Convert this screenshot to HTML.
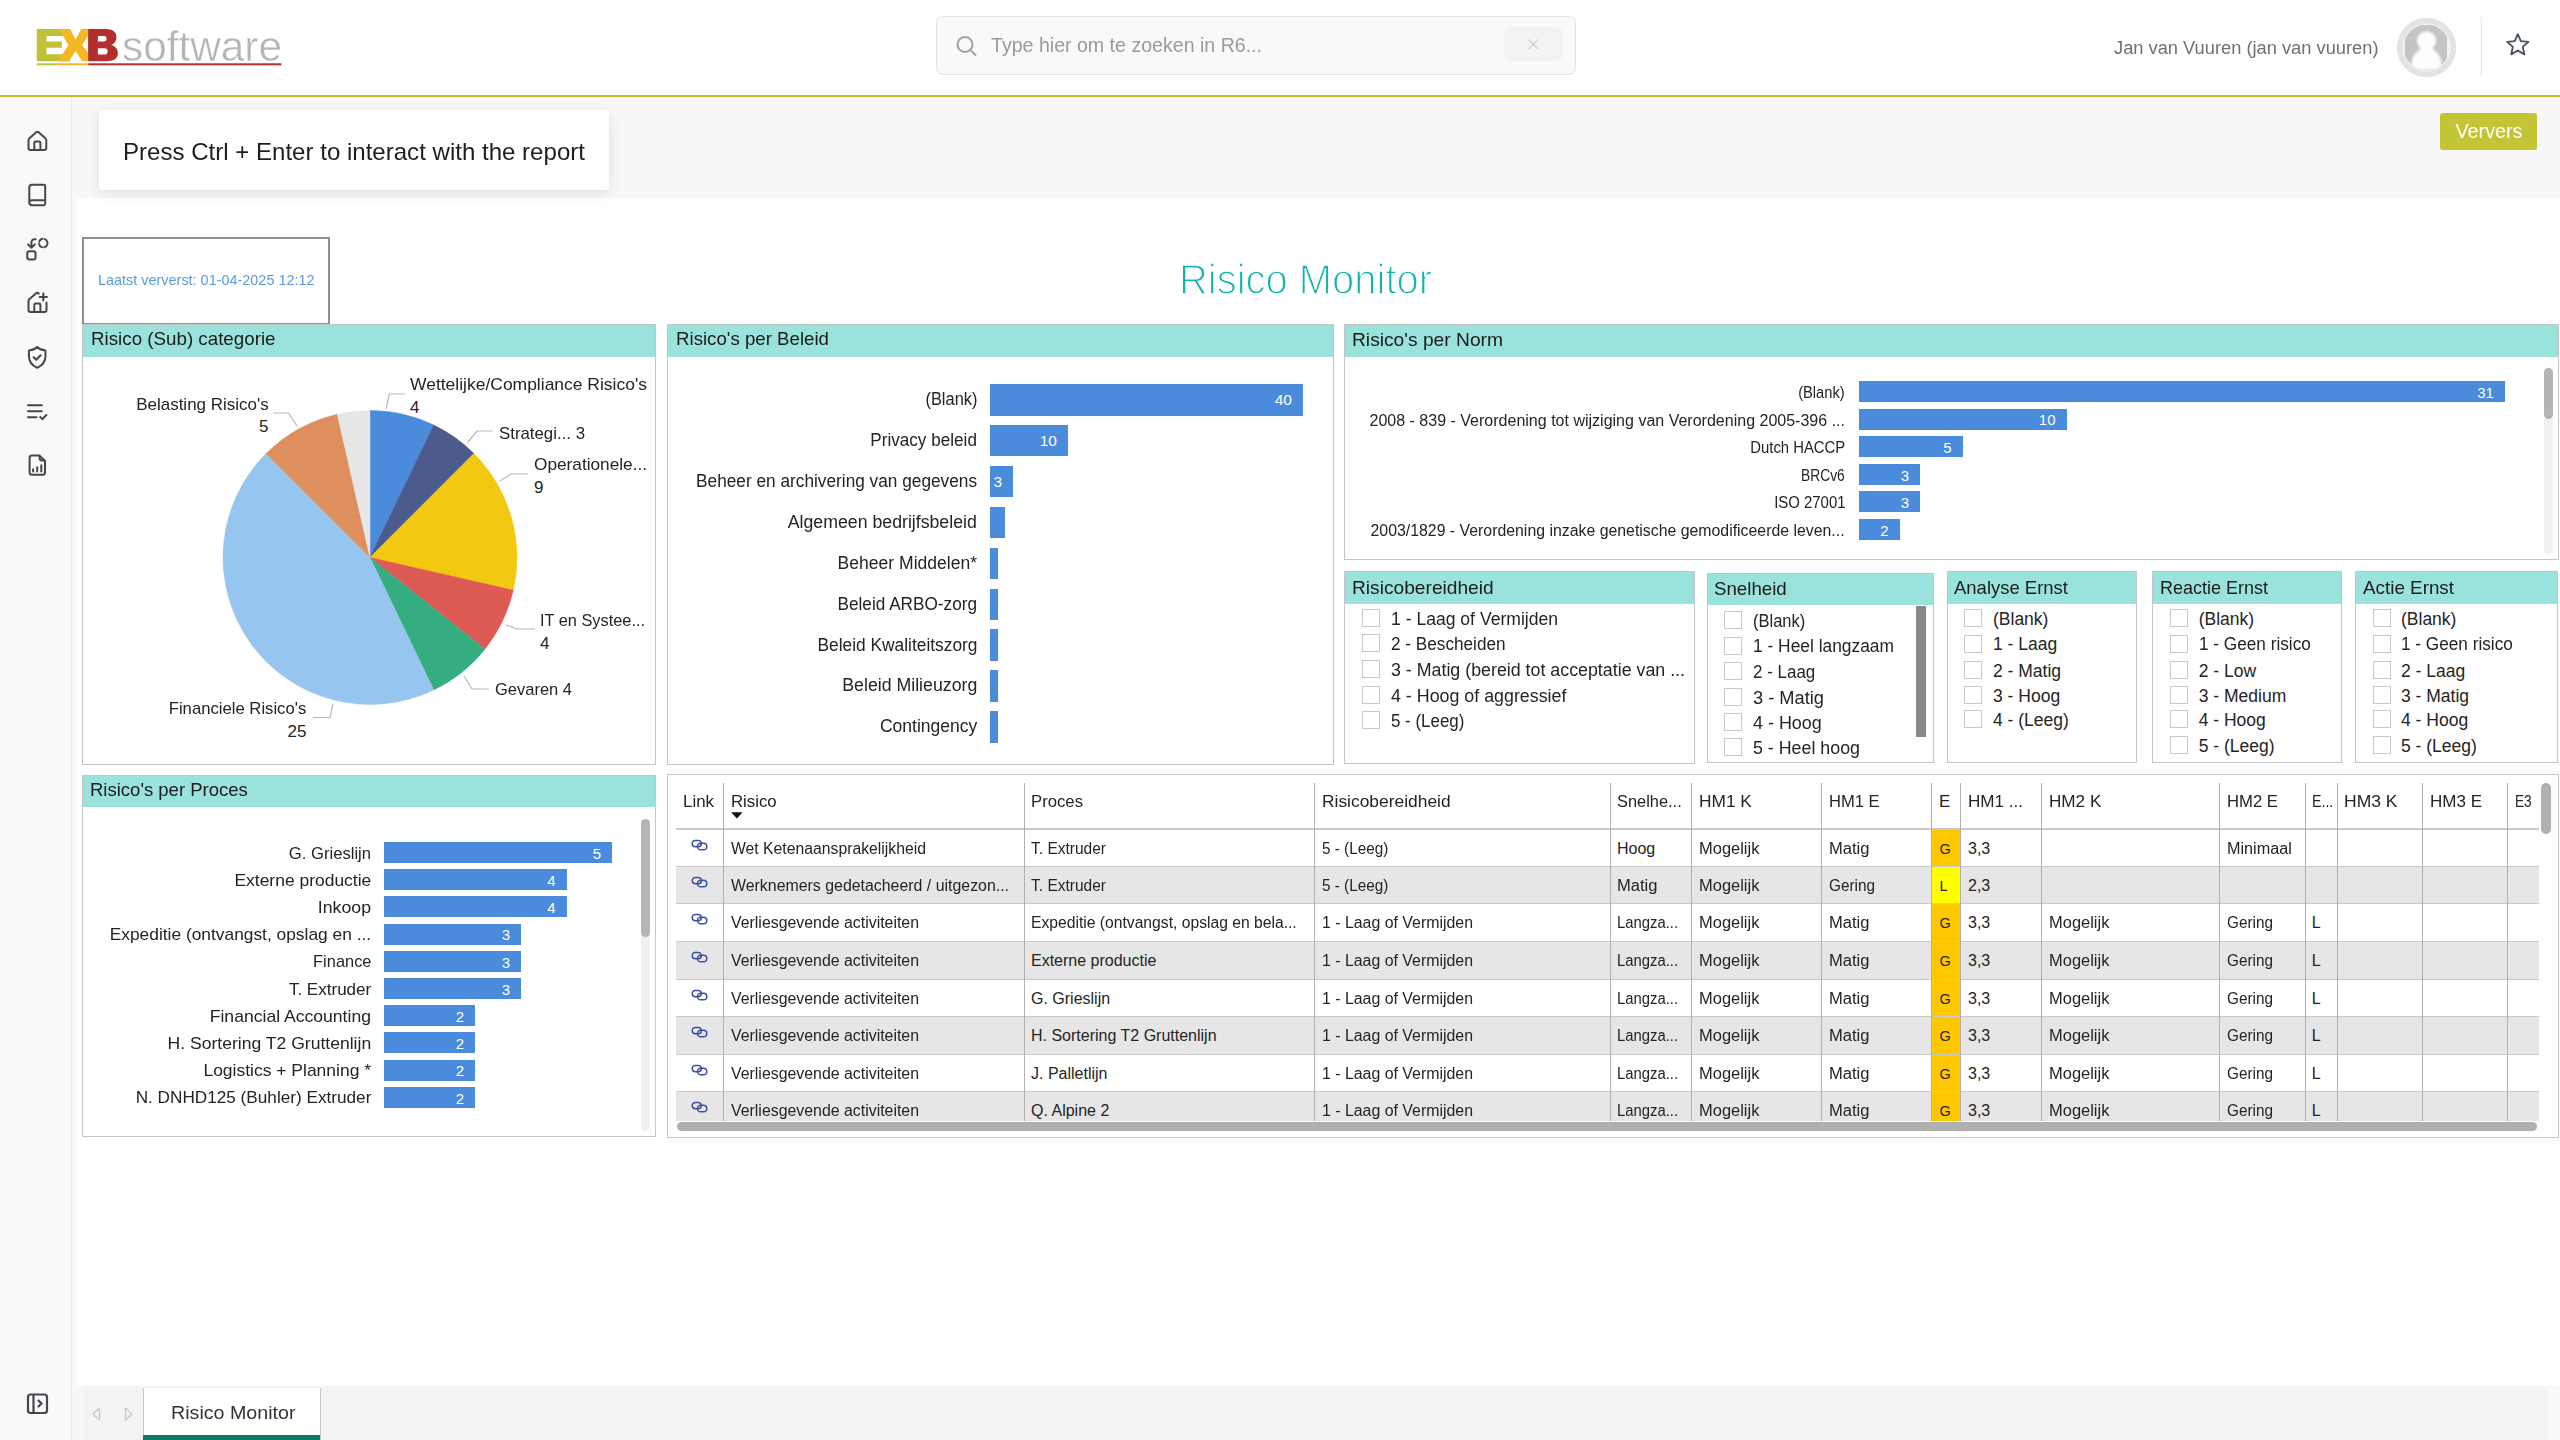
<!DOCTYPE html><html><head><meta charset="utf-8"><style>
html,body{margin:0;padding:0}
body{width:2560px;height:1440px;position:relative;overflow:hidden;background:#fff;font-family:"Liberation Sans",sans-serif}
.t{position:absolute;white-space:nowrap;line-height:1}
svg{position:absolute;overflow:visible}
</style></head><body>
<div style="position:absolute;left:0px;top:95px;width:2560px;height:2px;background:#BEC12C;"></div>
<svg style="left:0;top:0" width="300" height="80" viewBox="0 0 300 80">
<path fill="#BFC236" d="M36.75 29.1H70V36H46.5V41.5H61.8V47.7H46.5V54.2H70V61.2H36.75Z"/>
<path fill="#F5B724" d="M58.75 29.1H70.1L75.6 39.4L81.1 29.1H88V36L82.1 44.9L88 52.8V61.2H82.1L75.6 51.1L69 61.2H58L68.4 44.9Z"/>
<path fill="#B32E2E" fill-rule="evenodd" d="M88.1 29.1H106C113 29.1 116.5 32.5 116.5 37.2C116.5 41 114.5 43.6 111.3 44.9C115.5 46 117.9 49 117.9 53C117.9 58 114.5 61.2 107 61.2H88.1ZM97.9 36V41.5H104C105.8 41.5 106.6 40.4 106.6 38.8C106.6 37.1 105.8 36 104 36ZM97.9 48.3V54.5H104.5C106.6 54.5 107.7 53.3 107.7 51.4C107.7 49.5 106.6 48.3 104.5 48.3Z"/>
<rect x="36.75" y="63.3" width="21.5" height="2" fill="#BFC236"/>
<rect x="58.25" y="63.3" width="30" height="2" fill="#F5B724"/>
<rect x="88.25" y="63.3" width="193.2" height="2" fill="#B32E2E"/>
</svg>
<div class="t" style="left:121.5px;top:25.20px;font-size:43px;color:#B5B5B5;transform:scaleX(0.9846);transform-origin:left top;-webkit-text-stroke:0.45px #fff;">software</div>
<div style="position:absolute;left:936px;top:15.5px;width:640px;height:59.5px;border:1px solid #E3E3E3;border-radius:7px;background:#F9F9F9;box-sizing:border-box"></div>
<div style="position:absolute;left:1504px;top:27px;width:59px;height:34px;border-radius:6px;background:#F3F3F3"></div>
<svg style="left:0;top:0" width="1" height="1"><g fill="none" stroke="#A3A3A3" stroke-width="2"><circle cx="965" cy="44.5" r="7.5"/><path d="M970.5 50L976 55.5"/></g>
<g stroke="#D2D2D2" stroke-width="1.4"><path d="M1528.5 39.5L1538 49M1538 39.5L1528.5 49"/></g></svg>
<div class="t" style="left:991px;top:35.99px;font-size:19.5px;color:#9A9A9A;transform:scaleX(1.0041);transform-origin:left top;">Type hier om te zoeken in R6...</div>
<div class="t" style="left:2113.5px;top:39.26px;font-size:18px;color:#707070;transform:scaleX(1.0154);transform-origin:left top;">Jan van Vuuren (jan van vuuren)</div>
<svg style="left:0;top:0" width="1" height="1">
<defs><clipPath id="avc"><circle cx="2426.6" cy="47.5" r="23"/></clipPath><filter id="bl"><feGaussianBlur stdDeviation="0.9"/></filter></defs>
<circle cx="2426.6" cy="47.5" r="29.7" fill="#E3E3E3"/>
<circle cx="2426.6" cy="47.5" r="24.2" fill="#F1F1F1"/>
<g clip-path="url(#avc)"><rect x="2405" y="25" width="42" height="48" rx="13" fill="#C4C4C4"/>
<g filter="url(#bl)" fill="#FDFDFD"><circle cx="2426.6" cy="40.8" r="9.6"/><path d="M2421 48H2432L2436 52C2440 55 2442 60 2442 70H2411C2411 60 2413 55 2417 52Z"/></g></g>
<rect x="2480.75" y="17" width="1" height="60" fill="#E4E6EB"/>
<path d="M2517.80 34.10L2520.86 41.09L2528.45 41.84L2522.75 46.91L2524.38 54.36L2517.80 50.50L2511.22 54.36L2512.85 46.91L2507.15 41.84L2514.74 41.09Z" fill="none" stroke="#48515A" stroke-width="1.8" stroke-linejoin="round"/>
</svg>
<div style="position:absolute;left:0px;top:97px;width:71px;height:1343px;background:#F9F9F9;"></div>
<div style="position:absolute;left:71px;top:97px;width:1px;height:1343px;background:#E4E5EA;"></div>
<div style="position:absolute;left:72px;top:97px;width:2488px;height:101px;background:#F8F8F8;"></div>
<div style="position:absolute;left:72px;top:198px;width:3.5px;height:1188px;background:#F9F9F9;"></div>
<div style="position:absolute;left:99px;top:110px;width:510px;height:80px;background:#fff;border-radius:3px;box-shadow:0 3px 14px rgba(0,0,0,0.11)"></div>
<div class="t" style="left:123px;top:139.68px;font-size:24px;color:#1E1E1E;transform:scaleX(1.0024);transform-origin:left top;">Press Ctrl + Enter to interact with the report</div>
<div style="position:absolute;left:2440px;top:112.5px;width:97px;height:37.5px;background:#C3C536;border-radius:3px"></div>
<div class="t" style="left:1488.5px;width:2000px;text-align:center;top:120.87px;font-size:20px;color:#FFFFFF;transform:scaleX(0.9881);transform-origin:center top;">Ververs</div>
<svg style="left:0;top:0" width="1" height="1"><g fill="none" stroke="#45474D" stroke-width="2" stroke-linecap="round" stroke-linejoin="round">
<path d="M28.5 148V140.2C28.5 139.6 28.8 139 29.2 138.6L36.2 132.3C36.9 131.7 37.9 131.7 38.6 132.3L45.6 138.6C46 139 46.3 139.6 46.3 140.2V148C46.3 149.1 45.4 150 44.3 150H30.5C29.4 150 28.5 149.1 28.5 148Z M34.3 150V143C34.3 142.2 34.9 141.6 35.7 141.6H39C39.8 141.6 40.4 142.2 40.4 143V150"/>
<path d="M29.3 202.5V187.5C29.3 186 30.5 184.8 32 184.8H43.8C44.6 184.8 45.2 185.4 45.2 186.2V203.8C45.2 204.6 44.6 205.2 43.8 205.2H32C30.5 205.2 29.3 204 29.3 202.5C29.3 201 30.5 200.2 32 200.2H45.2"/>
<rect x="27.25" y="251.25" width="8.3" height="8.3" rx="2.3"/><path d="M35.6 239.2H34.6C32.7 239.2 31.4 240.6 31.4 242.6V247.8 M28 244.4L31.4 247.8L34.8 244.4"/>
<circle cx="43.25" cy="243.1" r="4.3" stroke-dasharray="4.45 2.3" stroke-dashoffset="-1.15"/>
<path d="M38.8 293.6L37.8 292.9C37.4 292.6 36.9 292.6 36.5 292.9L29.2 299.2C28.8 299.6 28.5 300.2 28.5 300.8V310C28.5 311.1 29.4 312 30.5 312H44.5C45.6 312 46.5 311.1 46.5 310V302.6 M34.3 312V305C34.3 304.2 34.9 303.6 35.7 303.6H39C39.8 303.6 40.4 304.2 40.4 305V312 M43.3 293.4V300.6 M39.7 297H46.9"/>
<path d="M37.2 347C35.5 348.8 33 350 29.6 350.2C29.2 350.2 28.9 350.6 28.9 351V356C28.9 361.5 32 365.5 37.2 367.8C42.4 365.5 45.5 361.5 45.5 356V351C45.5 350.6 45.2 350.2 44.8 350.2C41.4 350 38.9 348.8 37.2 347Z M33.6 357.3L36.2 359.8L40.6 355.2"/>
<path d="M28 405.3H41.8 M28 411.3H41.8 M28 417.2H36.5 M40.2 416.9L42.3 419.2L46.4 415"/>
<path d="M29.6 458C29.6 456.7 30.6 455.6 31.9 455.6H39.6L45 461V472.4C45 473.7 44 474.7 42.7 474.7H31.9C30.6 474.7 29.6 473.7 29.6 472.4Z M39.6 455.6V458.3C39.6 459.5 40.5 460.4 41.7 460.4H45 M33.1 469.2V471.4 M37.2 467.3V471.4 M41.3 465.2V471.4"/>
<rect x="28" y="1394.5" width="19" height="18.5" rx="2.5" stroke-width="2.2"/><path d="M33.5 1395V1412.5 M38.5 1400.5L41.5 1403.5L38.5 1406.5" stroke-width="2.2"/>
</g></svg>
<div style="position:absolute;left:72px;top:1386px;width:2488px;height:54px;background:#F3F3F3;"></div>
<div style="position:absolute;left:72px;top:1386px;width:12px;height:54px;background:#F8F8F8;"></div>
<div style="position:absolute;left:2548px;top:1386px;width:12px;height:54px;background:#F9F9F9;"></div>
<svg style="left:0;top:0" width="1" height="1"><g fill="none" stroke="#C9C9C9" stroke-width="1.3" stroke-linejoin="round">
<path d="M99.5 1408L93 1414L99.5 1420Z"/><path d="M125.5 1408L132 1414L125.5 1420Z"/></g></svg>
<div style="position:absolute;left:143px;top:1388px;width:177px;height:52px;background:#FFFFFF;"></div>
<div style="position:absolute;left:143px;top:1388px;width:1px;height:52px;background:#C8C8C8;"></div>
<div style="position:absolute;left:319.5px;top:1388px;width:1px;height:52px;background:#C8C8C8;"></div>
<div style="position:absolute;left:143px;top:1434.5px;width:177px;height:5.5px;background:#117865;"></div>
<div class="t" style="left:171px;top:1402.92px;font-size:19px;color:#333333;transform:scaleX(1.0343);transform-origin:left top;">Risico Monitor</div>
<div style="position:absolute;left:81.5px;top:236.5px;width:248.5px;height:88.5px;border:2px solid #8E8E93;box-sizing:border-box"></div>
<div class="t" style="left:98px;top:272.73px;font-size:14.5px;color:#5A9BE0;transform:scaleX(0.9948);transform-origin:left top;">Laatst ververst: 01-04-2025 12:12</div>
<div class="t" style="left:1179px;top:257.50px;font-size:43px;color:#12B5AA;transform:scaleX(0.9288);transform-origin:left top;-webkit-text-stroke:1.4px #fff;">Risico Monitor</div>
<div style="position:absolute;left:82px;top:324px;width:574px;height:441px;border:1px solid #C6C6C6;box-sizing:border-box;background:#fff"></div>
<div style="position:absolute;left:83px;top:325px;width:572px;height:31.5px;background:#9AE3DD;"></div>
<div class="t" style="left:90.5px;top:328.92px;font-size:19px;color:#1B1B1B;transform:scaleX(0.9871);transform-origin:left top;">Risico (Sub) categorie</div>
<svg style="left:0;top:0" width="1" height="1"><path fill="#4A8BDB" stroke="#4A8BDB" stroke-width="0.5" stroke-linejoin="round" d="M370 557.5L370.00 410.50A147 147 0 0 1 433.78 425.06Z"/><path fill="#4C5B8C" stroke="#4C5B8C" stroke-width="0.5" stroke-linejoin="round" d="M370 557.5L433.78 425.06A147 147 0 0 1 473.94 453.56Z"/><path fill="#F2C811" stroke="#F2C811" stroke-width="0.5" stroke-linejoin="round" d="M370 557.5L473.94 453.56A147 147 0 0 1 513.31 590.21Z"/><path fill="#DE5B55" stroke="#DE5B55" stroke-width="0.5" stroke-linejoin="round" d="M370 557.5L513.31 590.21A147 147 0 0 1 484.93 649.15Z"/><path fill="#34AE80" stroke="#34AE80" stroke-width="0.5" stroke-linejoin="round" d="M370 557.5L484.93 649.15A147 147 0 0 1 433.78 689.94Z"/><path fill="#96C5F0" stroke="#96C5F0" stroke-width="0.5" stroke-linejoin="round" d="M370 557.5L433.78 689.94A147 147 0 0 1 266.06 453.56Z"/><path fill="#DF8F5E" stroke="#DF8F5E" stroke-width="0.5" stroke-linejoin="round" d="M370 557.5L266.06 453.56A147 147 0 0 1 337.29 414.19Z"/><path fill="#E6E6E6" stroke="#E6E6E6" stroke-width="0.5" stroke-linejoin="round" d="M370 557.5L337.29 414.19A147 147 0 0 1 370.00 410.50Z"/><g fill="none" stroke="#B8B8B8" stroke-width="1.2"><path d="M386 409L389.4 394H405"/><path d="M297 426L288.7 413H273.7"/><path d="M467.5 442.5L477 431H492.5"/><path d="M500 481L511 474H528"/><path d="M505.6 624.7L517 629H535"/><path d="M464 676L472 689H489"/><path d="M333 704L330 717.5H313"/></g></svg>
<div class="t" style="left:410px;top:376.11px;font-size:17px;color:#252423;transform:scaleX(1.0277);transform-origin:left top;">Wettelijke/Compliance Risico's</div>
<div class="t" style="left:410px;top:399.11px;font-size:17px;color:#252423;">4</div>
<div class="t" style="right:2291.5px;top:395.61px;font-size:17px;color:#252423;transform:scaleX(0.9986);transform-origin:right top;">Belasting Risico's</div>
<div class="t" style="right:2291.5px;top:418.11px;font-size:17px;color:#252423;">5</div>
<div class="t" style="left:499px;top:425.11px;font-size:17px;color:#252423;transform:scaleX(0.9892);transform-origin:left top;">Strategi... 3</div>
<div class="t" style="left:534px;top:455.61px;font-size:17px;color:#252423;transform:scaleX(1.0133);transform-origin:left top;">Operationele...</div>
<div class="t" style="left:534px;top:479.11px;font-size:17px;color:#252423;">9</div>
<div class="t" style="left:540px;top:612.11px;font-size:17px;color:#252423;transform:scaleX(0.9607);transform-origin:left top;">IT en Systee...</div>
<div class="t" style="left:540px;top:634.61px;font-size:17px;color:#252423;">4</div>
<div class="t" style="left:495px;top:680.61px;font-size:17px;color:#252423;transform:scaleX(0.9700);transform-origin:left top;">Gevaren 4</div>
<div class="t" style="right:2253.5px;top:700.11px;font-size:17px;color:#252423;transform:scaleX(0.9805);transform-origin:right top;">Financiele Risico's</div>
<div class="t" style="right:2253.5px;top:723.11px;font-size:17px;color:#252423;">25</div>
<div style="position:absolute;left:667px;top:324px;width:667px;height:441px;border:1px solid #C6C6C6;box-sizing:border-box;background:#fff"></div>
<div style="position:absolute;left:668px;top:325px;width:665px;height:31.5px;background:#9AE3DD;"></div>
<div class="t" style="left:675.6px;top:328.92px;font-size:19px;color:#1B1B1B;transform:scaleX(0.9827);transform-origin:left top;">Risico's per Beleid</div>
<div style="position:absolute;left:990px;top:384.0px;width:313px;height:31.5px;background:#4A8BDB;"></div>
<div class="t" style="right:1583px;top:391.19px;font-size:17.5px;color:#252423;transform:scaleX(0.9381);transform-origin:right top;">(Blank)</div>
<div class="t" style="right:1268px;top:392.38px;font-size:15.5px;color:#FFFFFF;">40</div>
<div style="position:absolute;left:990px;top:424.9px;width:78px;height:31.5px;background:#4A8BDB;"></div>
<div class="t" style="right:1583px;top:432.09px;font-size:17.5px;color:#252423;transform:scaleX(0.9794);transform-origin:right top;">Privacy beleid</div>
<div class="t" style="right:1503px;top:433.28px;font-size:15.5px;color:#FFFFFF;">10</div>
<div style="position:absolute;left:990px;top:465.8px;width:23px;height:31.5px;background:#4A8BDB;"></div>
<div class="t" style="right:1583px;top:472.99px;font-size:17.5px;color:#252423;transform:scaleX(0.9858);transform-origin:right top;">Beheer en archivering van gegevens</div>
<div class="t" style="left:993.5px;top:474.18px;font-size:15.5px;color:#FFFFFF;">3</div>
<div style="position:absolute;left:990px;top:506.7px;width:15px;height:31.5px;background:#4A8BDB;"></div>
<div class="t" style="right:1583px;top:513.89px;font-size:17.5px;color:#252423;transform:scaleX(1.0119);transform-origin:right top;">Algemeen bedrijfsbeleid</div>
<div style="position:absolute;left:990px;top:547.6px;width:7.5px;height:31.5px;background:#4A8BDB;"></div>
<div class="t" style="right:1583px;top:554.79px;font-size:17.5px;color:#252423;transform:scaleX(1.0027);transform-origin:right top;">Beheer Middelen*</div>
<div style="position:absolute;left:990px;top:588.5px;width:7.5px;height:31.5px;background:#4A8BDB;"></div>
<div class="t" style="right:1583px;top:595.69px;font-size:17.5px;color:#252423;transform:scaleX(0.9823);transform-origin:right top;">Beleid ARBO-zorg</div>
<div style="position:absolute;left:990px;top:629.4px;width:7.5px;height:31.5px;background:#4A8BDB;"></div>
<div class="t" style="right:1583px;top:636.59px;font-size:17.5px;color:#252423;transform:scaleX(0.9909);transform-origin:right top;">Beleid Kwaliteitszorg</div>
<div style="position:absolute;left:990px;top:670.3px;width:7.5px;height:31.5px;background:#4A8BDB;"></div>
<div class="t" style="right:1583px;top:677.49px;font-size:17.5px;color:#252423;transform:scaleX(1.0131);transform-origin:right top;">Beleid Milieuzorg</div>
<div style="position:absolute;left:990px;top:711.2px;width:7.5px;height:31.5px;background:#4A8BDB;"></div>
<div class="t" style="right:1583px;top:718.39px;font-size:17.5px;color:#252423;transform:scaleX(1.0002);transform-origin:right top;">Contingency</div>
<div style="position:absolute;left:1344px;top:324px;width:1215px;height:236px;border:1px solid #C6C6C6;box-sizing:border-box;background:#fff"></div>
<div style="position:absolute;left:1345px;top:325px;width:1213px;height:31.5px;background:#9AE3DD;"></div>
<div class="t" style="left:1352px;top:329.92px;font-size:19px;color:#1B1B1B;transform:scaleX(1.0112);transform-origin:left top;">Risico's per Norm</div>
<div style="position:absolute;left:1858.6px;top:381.0px;width:646.8px;height:21px;background:#4A8BDB;"></div>
<div class="t" style="right:715px;top:384.96px;font-size:16px;color:#252423;transform:scaleX(0.9175);transform-origin:right top;">(Blank)</div>
<div class="t" style="right:66.09999999999991px;top:384.80px;font-size:15px;color:#FFFFFF;">31</div>
<div style="position:absolute;left:1858.6px;top:408.6px;width:208.4px;height:21px;background:#4A8BDB;"></div>
<div class="t" style="right:715px;top:412.56px;font-size:16px;color:#252423;transform:scaleX(1.0011);transform-origin:right top;">2008 - 839 - Verordening tot wijziging van Verordening 2005-396 ...</div>
<div class="t" style="right:504.5px;top:412.40px;font-size:15px;color:#FFFFFF;">10</div>
<div style="position:absolute;left:1858.6px;top:436.2px;width:104.4px;height:21px;background:#4A8BDB;"></div>
<div class="t" style="right:715px;top:440.16px;font-size:16px;color:#252423;transform:scaleX(0.9291);transform-origin:right top;">Dutch HACCP</div>
<div class="t" style="right:608.5px;top:440.00px;font-size:15px;color:#FFFFFF;">5</div>
<div style="position:absolute;left:1858.6px;top:463.8px;width:61.9px;height:21px;background:#4A8BDB;"></div>
<div class="t" style="right:715px;top:467.76px;font-size:16px;color:#252423;transform:scaleX(0.8603);transform-origin:right top;">BRCv6</div>
<div class="t" style="right:651.0px;top:467.60px;font-size:15px;color:#FFFFFF;">3</div>
<div style="position:absolute;left:1858.6px;top:491.4px;width:61.9px;height:21px;background:#4A8BDB;"></div>
<div class="t" style="right:715px;top:495.36px;font-size:16px;color:#252423;transform:scaleX(0.9320);transform-origin:right top;">ISO 27001</div>
<div class="t" style="right:651.0px;top:495.20px;font-size:15px;color:#FFFFFF;">3</div>
<div style="position:absolute;left:1858.6px;top:519.0px;width:41.4px;height:21px;background:#4A8BDB;"></div>
<div class="t" style="right:715px;top:522.96px;font-size:16px;color:#252423;transform:scaleX(0.9905);transform-origin:right top;">2003/1829 - Verordening inzake genetische gemodificeerde leven...</div>
<div class="t" style="right:671.5px;top:522.80px;font-size:15px;color:#FFFFFF;">2</div>
<div style="position:absolute;left:2543.5px;top:367.7px;width:9.5px;height:186px;border-radius:5px;background:#F1F1F1"></div>
<div style="position:absolute;left:2543.5px;top:367.7px;width:9.5px;height:51.3px;border-radius:5px;background:#B4B4B4"></div>
<div style="position:absolute;left:1344px;top:571px;width:351px;height:193px;border:1px solid #C6C6C6;box-sizing:border-box;background:#fff"></div>
<div style="position:absolute;left:1345px;top:572px;width:349px;height:32px;background:#9AE3DD;"></div>
<div class="t" style="left:1352px;top:577.52px;font-size:19px;color:#1B1B1B;transform:scaleX(1.0087);transform-origin:left top;">Risicobereidheid</div>
<div style="position:absolute;left:1362px;top:609px;width:18px;height:18px;border:1px solid #C8C8C8;box-sizing:border-box;background:#fff"></div>
<div class="t" style="left:1391px;top:610.99px;font-size:17.5px;color:#252423;transform:scaleX(1.0039);transform-origin:left top;">1 - Laag of Vermijden</div>
<div style="position:absolute;left:1362px;top:634px;width:18px;height:18px;border:1px solid #C8C8C8;box-sizing:border-box;background:#fff"></div>
<div class="t" style="left:1391px;top:635.99px;font-size:17.5px;color:#252423;transform:scaleX(0.9817);transform-origin:left top;">2 - Bescheiden</div>
<div style="position:absolute;left:1362px;top:660px;width:18px;height:18px;border:1px solid #C8C8C8;box-sizing:border-box;background:#fff"></div>
<div class="t" style="left:1391px;top:661.99px;font-size:17.5px;color:#252423;transform:scaleX(1.0176);transform-origin:left top;">3 - Matig (bereid tot acceptatie van ...</div>
<div style="position:absolute;left:1362px;top:686px;width:18px;height:18px;border:1px solid #C8C8C8;box-sizing:border-box;background:#fff"></div>
<div class="t" style="left:1391px;top:687.99px;font-size:17.5px;color:#252423;transform:scaleX(1.0187);transform-origin:left top;">4 - Hoog of aggressief</div>
<div style="position:absolute;left:1362px;top:711px;width:18px;height:18px;border:1px solid #C8C8C8;box-sizing:border-box;background:#fff"></div>
<div class="t" style="left:1391px;top:712.99px;font-size:17.5px;color:#252423;transform:scaleX(0.9674);transform-origin:left top;">5 - (Leeg)</div>
<div style="position:absolute;left:1707px;top:573px;width:227px;height:190px;border:1px solid #C6C6C6;box-sizing:border-box;background:#fff"></div>
<div style="position:absolute;left:1708px;top:574px;width:225px;height:31px;background:#9AE3DD;"></div>
<div class="t" style="left:1714px;top:578.72px;font-size:19px;color:#1B1B1B;transform:scaleX(0.9831);transform-origin:left top;">Snelheid</div>
<div style="position:absolute;left:1724px;top:611px;width:18px;height:18px;border:1px solid #C8C8C8;box-sizing:border-box;background:#fff"></div>
<div class="t" style="left:1753px;top:612.99px;font-size:17.5px;color:#252423;transform:scaleX(0.9435);transform-origin:left top;">(Blank)</div>
<div style="position:absolute;left:1724px;top:636.5px;width:18px;height:18px;border:1px solid #C8C8C8;box-sizing:border-box;background:#fff"></div>
<div class="t" style="left:1753px;top:638.49px;font-size:17.5px;color:#252423;transform:scaleX(0.9928);transform-origin:left top;">1 - Heel langzaam</div>
<div style="position:absolute;left:1724px;top:662px;width:18px;height:18px;border:1px solid #C8C8C8;box-sizing:border-box;background:#fff"></div>
<div class="t" style="left:1753px;top:663.99px;font-size:17.5px;color:#252423;transform:scaleX(0.9701);transform-origin:left top;">2 - Laag</div>
<div style="position:absolute;left:1724px;top:687.7px;width:18px;height:18px;border:1px solid #C8C8C8;box-sizing:border-box;background:#fff"></div>
<div class="t" style="left:1753px;top:689.69px;font-size:17.5px;color:#252423;transform:scaleX(1.0429);transform-origin:left top;">3 - Matig</div>
<div style="position:absolute;left:1724px;top:712.7px;width:18px;height:18px;border:1px solid #C8C8C8;box-sizing:border-box;background:#fff"></div>
<div class="t" style="left:1753px;top:714.69px;font-size:17.5px;color:#252423;transform:scaleX(1.0250);transform-origin:left top;">4 - Hoog</div>
<div style="position:absolute;left:1724px;top:737.7px;width:18px;height:18px;border:1px solid #C8C8C8;box-sizing:border-box;background:#fff"></div>
<div class="t" style="left:1753px;top:739.69px;font-size:17.5px;color:#252423;transform:scaleX(1.0184);transform-origin:left top;">5 - Heel hoog</div>
<div style="position:absolute;left:1916px;top:606px;width:10px;height:130.5px;background:#888888;"></div>
<div style="position:absolute;left:1947px;top:571px;width:190px;height:192px;border:1px solid #C6C6C6;box-sizing:border-box;background:#fff"></div>
<div style="position:absolute;left:1948px;top:572px;width:188px;height:32px;background:#9AE3DD;"></div>
<div class="t" style="left:1954px;top:577.52px;font-size:19px;color:#1B1B1B;transform:scaleX(0.9725);transform-origin:left top;">Analyse Ernst</div>
<div style="position:absolute;left:1964px;top:609px;width:18px;height:18px;border:1px solid #C8C8C8;box-sizing:border-box;background:#fff"></div>
<div class="t" style="left:1993px;top:610.99px;font-size:17.5px;color:#252423;">(Blank)</div>
<div style="position:absolute;left:1964px;top:634.5px;width:18px;height:18px;border:1px solid #C8C8C8;box-sizing:border-box;background:#fff"></div>
<div class="t" style="left:1993px;top:636.49px;font-size:17.5px;color:#252423;">1 - Laag</div>
<div style="position:absolute;left:1964px;top:660.7px;width:18px;height:18px;border:1px solid #C8C8C8;box-sizing:border-box;background:#fff"></div>
<div class="t" style="left:1993px;top:662.69px;font-size:17.5px;color:#252423;">2 - Matig</div>
<div style="position:absolute;left:1964px;top:686px;width:18px;height:18px;border:1px solid #C8C8C8;box-sizing:border-box;background:#fff"></div>
<div class="t" style="left:1993px;top:687.99px;font-size:17.5px;color:#252423;">3 - Hoog</div>
<div style="position:absolute;left:1964px;top:710.3px;width:18px;height:18px;border:1px solid #C8C8C8;box-sizing:border-box;background:#fff"></div>
<div class="t" style="left:1993px;top:712.29px;font-size:17.5px;color:#252423;">4 - (Leeg)</div>
<div style="position:absolute;left:2152px;top:571px;width:190px;height:192px;border:1px solid #C6C6C6;box-sizing:border-box;background:#fff"></div>
<div style="position:absolute;left:2153px;top:572px;width:188px;height:32px;background:#9AE3DD;"></div>
<div class="t" style="left:2160px;top:577.52px;font-size:19px;color:#1B1B1B;transform:scaleX(0.9470);transform-origin:left top;">Reactie Ernst</div>
<div style="position:absolute;left:2170px;top:609px;width:18px;height:18px;border:1px solid #C8C8C8;box-sizing:border-box;background:#fff"></div>
<div class="t" style="left:2198.7px;top:610.99px;font-size:17.5px;color:#252423;">(Blank)</div>
<div style="position:absolute;left:2170px;top:634.5px;width:18px;height:18px;border:1px solid #C8C8C8;box-sizing:border-box;background:#fff"></div>
<div class="t" style="left:2198.7px;top:636.49px;font-size:17.5px;color:#252423;transform:scaleX(0.9825);transform-origin:left top;">1 - Geen risico</div>
<div style="position:absolute;left:2170px;top:660.7px;width:18px;height:18px;border:1px solid #C8C8C8;box-sizing:border-box;background:#fff"></div>
<div class="t" style="left:2198.7px;top:662.69px;font-size:17.5px;color:#252423;">2 - Low</div>
<div style="position:absolute;left:2170px;top:686px;width:18px;height:18px;border:1px solid #C8C8C8;box-sizing:border-box;background:#fff"></div>
<div class="t" style="left:2198.7px;top:687.99px;font-size:17.5px;color:#252423;">3 - Medium</div>
<div style="position:absolute;left:2170px;top:710.3px;width:18px;height:18px;border:1px solid #C8C8C8;box-sizing:border-box;background:#fff"></div>
<div class="t" style="left:2198.7px;top:712.29px;font-size:17.5px;color:#252423;">4 - Hoog</div>
<div style="position:absolute;left:2170px;top:735.7px;width:18px;height:18px;border:1px solid #C8C8C8;box-sizing:border-box;background:#fff"></div>
<div class="t" style="left:2198.7px;top:737.69px;font-size:17.5px;color:#252423;">5 - (Leeg)</div>
<div style="position:absolute;left:2355px;top:571px;width:203px;height:192px;border:1px solid #C6C6C6;box-sizing:border-box;background:#fff"></div>
<div style="position:absolute;left:2356px;top:572px;width:201px;height:32px;background:#9AE3DD;"></div>
<div class="t" style="left:2362.6px;top:577.52px;font-size:19px;color:#1B1B1B;transform:scaleX(0.9906);transform-origin:left top;">Actie Ernst</div>
<div style="position:absolute;left:2373px;top:609px;width:18px;height:18px;border:1px solid #C8C8C8;box-sizing:border-box;background:#fff"></div>
<div class="t" style="left:2401px;top:610.99px;font-size:17.5px;color:#252423;">(Blank)</div>
<div style="position:absolute;left:2373px;top:634.5px;width:18px;height:18px;border:1px solid #C8C8C8;box-sizing:border-box;background:#fff"></div>
<div class="t" style="left:2401px;top:636.49px;font-size:17.5px;color:#252423;transform:scaleX(0.9825);transform-origin:left top;">1 - Geen risico</div>
<div style="position:absolute;left:2373px;top:660.7px;width:18px;height:18px;border:1px solid #C8C8C8;box-sizing:border-box;background:#fff"></div>
<div class="t" style="left:2401px;top:662.69px;font-size:17.5px;color:#252423;">2 - Laag</div>
<div style="position:absolute;left:2373px;top:686px;width:18px;height:18px;border:1px solid #C8C8C8;box-sizing:border-box;background:#fff"></div>
<div class="t" style="left:2401px;top:687.99px;font-size:17.5px;color:#252423;">3 - Matig</div>
<div style="position:absolute;left:2373px;top:710.3px;width:18px;height:18px;border:1px solid #C8C8C8;box-sizing:border-box;background:#fff"></div>
<div class="t" style="left:2401px;top:712.29px;font-size:17.5px;color:#252423;">4 - Hoog</div>
<div style="position:absolute;left:2373px;top:735.7px;width:18px;height:18px;border:1px solid #C8C8C8;box-sizing:border-box;background:#fff"></div>
<div class="t" style="left:2401px;top:737.69px;font-size:17.5px;color:#252423;">5 - (Leeg)</div>
<div style="position:absolute;left:82px;top:775px;width:574px;height:362px;border:1px solid #C6C6C6;box-sizing:border-box;background:#fff"></div>
<div style="position:absolute;left:83px;top:776px;width:572px;height:31px;background:#9AE3DD;"></div>
<div class="t" style="left:89.8px;top:779.62px;font-size:19px;color:#1B1B1B;transform:scaleX(0.9740);transform-origin:left top;">Risico's per Proces</div>
<div style="position:absolute;left:384px;top:842.0px;width:228px;height:21px;background:#4A8BDB;"></div>
<div class="t" style="right:2189px;top:844.61px;font-size:17px;color:#252423;transform:scaleX(0.9789);transform-origin:right top;">G. Grieslijn</div>
<div class="t" style="right:1959px;top:845.80px;font-size:15px;color:#FFFFFF;">5</div>
<div style="position:absolute;left:384px;top:869.2px;width:182.6px;height:21px;background:#4A8BDB;"></div>
<div class="t" style="right:2189px;top:871.81px;font-size:17px;color:#252423;transform:scaleX(1.0267);transform-origin:right top;">Externe productie</div>
<div class="t" style="right:2004.4px;top:873.00px;font-size:15px;color:#FFFFFF;">4</div>
<div style="position:absolute;left:384px;top:896.4px;width:182.6px;height:21px;background:#4A8BDB;"></div>
<div class="t" style="right:2189px;top:899.01px;font-size:17px;color:#252423;transform:scaleX(1.0423);transform-origin:right top;">Inkoop</div>
<div class="t" style="right:2004.4px;top:900.20px;font-size:15px;color:#FFFFFF;">4</div>
<div style="position:absolute;left:384px;top:923.6px;width:137px;height:21px;background:#4A8BDB;"></div>
<div class="t" style="right:2189px;top:926.21px;font-size:17px;color:#252423;transform:scaleX(1.0207);transform-origin:right top;">Expeditie (ontvangst, opslag en ...</div>
<div class="t" style="right:2050px;top:927.40px;font-size:15px;color:#FFFFFF;">3</div>
<div style="position:absolute;left:384px;top:950.8px;width:137px;height:21px;background:#4A8BDB;"></div>
<div class="t" style="right:2189px;top:953.41px;font-size:17px;color:#252423;transform:scaleX(0.9656);transform-origin:right top;">Finance</div>
<div class="t" style="right:2050px;top:954.60px;font-size:15px;color:#FFFFFF;">3</div>
<div style="position:absolute;left:384px;top:978.0px;width:137px;height:21px;background:#4A8BDB;"></div>
<div class="t" style="right:2189px;top:980.61px;font-size:17px;color:#252423;transform:scaleX(1.0013);transform-origin:right top;">T. Extruder</div>
<div class="t" style="right:2050px;top:981.80px;font-size:15px;color:#FFFFFF;">3</div>
<div style="position:absolute;left:384px;top:1005.2px;width:91px;height:21px;background:#4A8BDB;"></div>
<div class="t" style="right:2189px;top:1007.81px;font-size:17px;color:#252423;transform:scaleX(1.0338);transform-origin:right top;">Financial Accounting</div>
<div class="t" style="right:2096px;top:1009.00px;font-size:15px;color:#FFFFFF;">2</div>
<div style="position:absolute;left:384px;top:1032.4px;width:91px;height:21px;background:#4A8BDB;"></div>
<div class="t" style="right:2189px;top:1035.01px;font-size:17px;color:#252423;transform:scaleX(1.0327);transform-origin:right top;">H. Sortering T2 Gruttenlijn</div>
<div class="t" style="right:2096px;top:1036.20px;font-size:15px;color:#FFFFFF;">2</div>
<div style="position:absolute;left:384px;top:1059.6px;width:91px;height:21px;background:#4A8BDB;"></div>
<div class="t" style="right:2189px;top:1062.21px;font-size:17px;color:#252423;transform:scaleX(1.0281);transform-origin:right top;">Logistics + Planning *</div>
<div class="t" style="right:2096px;top:1063.40px;font-size:15px;color:#FFFFFF;">2</div>
<div style="position:absolute;left:384px;top:1086.8px;width:91px;height:21px;background:#4A8BDB;"></div>
<div class="t" style="right:2189px;top:1089.41px;font-size:17px;color:#252423;transform:scaleX(1.0101);transform-origin:right top;">N. DNHD125 (Buhler) Extruder</div>
<div class="t" style="right:2096px;top:1090.60px;font-size:15px;color:#FFFFFF;">2</div>
<div style="position:absolute;left:641px;top:818.8px;width:9px;height:312px;border-radius:5px;background:#F0F0F0"></div>
<div style="position:absolute;left:641px;top:818.8px;width:9px;height:118px;border-radius:5px;background:#B6B6B6"></div>
<div style="position:absolute;left:667px;top:774px;width:1892px;height:364px;border:1px solid #C6C6C6;box-sizing:border-box;background:#fff"></div>
<div style="position:absolute;left:675.7px;top:866px;width:1863.3px;height:37px;background:#E6E6E6;"></div>
<div style="position:absolute;left:675.7px;top:941px;width:1863.3px;height:38px;background:#E6E6E6;"></div>
<div style="position:absolute;left:675.7px;top:1016px;width:1863.3px;height:38px;background:#E6E6E6;"></div>
<div style="position:absolute;left:675.7px;top:1091px;width:1863.3px;height:30px;background:#E6E6E6;"></div>
<div style="position:absolute;left:1931px;top:829px;width:29px;height:37px;background:#FFC700;"></div>
<div style="position:absolute;left:1931px;top:866px;width:29px;height:37px;background:#FFFF00;"></div>
<div style="position:absolute;left:1931px;top:903px;width:29px;height:38px;background:#FFC700;"></div>
<div style="position:absolute;left:1931px;top:941px;width:29px;height:38px;background:#FFC700;"></div>
<div style="position:absolute;left:1931px;top:979px;width:29px;height:37px;background:#FFC700;"></div>
<div style="position:absolute;left:1931px;top:1016px;width:29px;height:38px;background:#FFC700;"></div>
<div style="position:absolute;left:1931px;top:1054px;width:29px;height:37px;background:#FFC700;"></div>
<div style="position:absolute;left:1931px;top:1091px;width:29px;height:30px;background:#FFC700;"></div>
<div style="position:absolute;left:675.7px;top:828px;width:1863.3px;height:2px;background:#C9C9C9;"></div>
<div style="position:absolute;left:675.7px;top:865.5px;width:1863.3px;height:1.5px;background:#C9C9C9;"></div>
<div style="position:absolute;left:675.7px;top:902.5px;width:1863.3px;height:1.5px;background:#C9C9C9;"></div>
<div style="position:absolute;left:675.7px;top:940.5px;width:1863.3px;height:1.5px;background:#C9C9C9;"></div>
<div style="position:absolute;left:675.7px;top:978.5px;width:1863.3px;height:1.5px;background:#C9C9C9;"></div>
<div style="position:absolute;left:675.7px;top:1015.5px;width:1863.3px;height:1.5px;background:#C9C9C9;"></div>
<div style="position:absolute;left:675.7px;top:1053.5px;width:1863.3px;height:1.5px;background:#C9C9C9;"></div>
<div style="position:absolute;left:675.7px;top:1090.5px;width:1863.3px;height:1.5px;background:#C9C9C9;"></div>
<div style="position:absolute;left:722.5px;top:783px;width:1.2px;height:338px;background:#B0B0B0;"></div>
<div style="position:absolute;left:1023.5px;top:783px;width:1.2px;height:338px;background:#B0B0B0;"></div>
<div style="position:absolute;left:1313.5px;top:783px;width:1.2px;height:338px;background:#B0B0B0;"></div>
<div style="position:absolute;left:1609.5px;top:783px;width:1.2px;height:338px;background:#B0B0B0;"></div>
<div style="position:absolute;left:1690.5px;top:783px;width:1.2px;height:338px;background:#B0B0B0;"></div>
<div style="position:absolute;left:1820.5px;top:783px;width:1.2px;height:338px;background:#B0B0B0;"></div>
<div style="position:absolute;left:1930.5px;top:783px;width:1.2px;height:338px;background:#B0B0B0;"></div>
<div style="position:absolute;left:1959.5px;top:783px;width:1.2px;height:338px;background:#B0B0B0;"></div>
<div style="position:absolute;left:2040.5px;top:783px;width:1.2px;height:338px;background:#B0B0B0;"></div>
<div style="position:absolute;left:2218.5px;top:783px;width:1.2px;height:338px;background:#B0B0B0;"></div>
<div style="position:absolute;left:2304.5px;top:783px;width:1.2px;height:338px;background:#B0B0B0;"></div>
<div style="position:absolute;left:2336.5px;top:783px;width:1.2px;height:338px;background:#B0B0B0;"></div>
<div style="position:absolute;left:2421.5px;top:783px;width:1.2px;height:338px;background:#B0B0B0;"></div>
<div style="position:absolute;left:2506.5px;top:783px;width:1.2px;height:338px;background:#B0B0B0;"></div>
<div class="t" style="left:683px;top:793.11px;font-size:17px;color:#252423;transform:scaleX(0.9940);transform-origin:left top;">Link</div>
<div class="t" style="left:730.5px;top:793.11px;font-size:17px;color:#252423;transform:scaleX(0.9874);transform-origin:left top;">Risico</div>
<div class="t" style="left:1031px;top:793.11px;font-size:17px;color:#252423;transform:scaleX(0.9828);transform-origin:left top;">Proces</div>
<div class="t" style="left:1321.8px;top:793.11px;font-size:17px;color:#252423;transform:scaleX(1.0232);transform-origin:left top;">Risicobereidheid</div>
<div class="t" style="left:1617px;top:793.11px;font-size:17px;color:#252423;transform:scaleX(0.9642);transform-origin:left top;">Snelhe...</div>
<div class="t" style="left:1699px;top:793.11px;font-size:17px;color:#252423;transform:scaleX(1.0182);transform-origin:left top;">HM1 K</div>
<div class="t" style="left:1828.7px;top:793.11px;font-size:17px;color:#252423;transform:scaleX(0.9739);transform-origin:left top;">HM1 E</div>
<div class="t" style="left:1939px;top:793.11px;font-size:17px;color:#252423;">E</div>
<div class="t" style="left:1968px;top:793.11px;font-size:17px;color:#252423;transform:scaleX(1.0039);transform-origin:left top;">HM1 ...</div>
<div class="t" style="left:2049px;top:793.11px;font-size:17px;color:#252423;transform:scaleX(1.0066);transform-origin:left top;">HM2 K</div>
<div class="t" style="left:2227px;top:793.11px;font-size:17px;color:#252423;transform:scaleX(0.9816);transform-origin:left top;">HM2 E</div>
<div class="t" style="left:2311.7px;top:793.11px;font-size:17px;color:#252423;transform:scaleX(0.8350);transform-origin:left top;">E...</div>
<div class="t" style="left:2344px;top:793.11px;font-size:17px;color:#252423;transform:scaleX(1.0297);transform-origin:left top;">HM3 K</div>
<div class="t" style="left:2429.8px;top:793.11px;font-size:17px;color:#252423;transform:scaleX(1.0009);transform-origin:left top;">HM3 E</div>
<div class="t" style="left:2515px;top:793.11px;font-size:17px;color:#252423;transform:scaleX(0.8031);transform-origin:left top;">E3</div>
<svg style="left:0;top:0" width="1" height="1"><path d="M731.2 812.3H742.6L736.9 818.6Z" fill="#111"/></svg>
<div class="t" style="left:730.5px;top:840.86px;font-size:16px;color:#252423;transform:scaleX(0.9846);transform-origin:left top;">Wet Ketenaansprakelijkheid</div>
<div class="t" style="left:1031px;top:840.86px;font-size:16px;color:#252423;transform:scaleX(0.9695);transform-origin:left top;">T. Extruder</div>
<div class="t" style="left:1321.8px;top:840.86px;font-size:16px;color:#252423;transform:scaleX(0.9558);transform-origin:left top;">5 - (Leeg)</div>
<div class="t" style="left:1617px;top:840.86px;font-size:16px;color:#252423;">Hoog</div>
<div class="t" style="left:1699px;top:840.86px;font-size:16px;color:#252423;transform:scaleX(1.0292);transform-origin:left top;">Mogelijk</div>
<div class="t" style="left:1828.7px;top:840.86px;font-size:16px;color:#252423;transform:scaleX(1.0351);transform-origin:left top;">Matig</div>
<div class="t" style="left:1939.5px;top:842.13px;font-size:14.5px;color:#252423;">G</div>
<div class="t" style="left:1968px;top:840.86px;font-size:16px;color:#252423;">3,3</div>
<div class="t" style="left:2227px;top:840.86px;font-size:16px;color:#252423;transform:scaleX(1.0123);transform-origin:left top;">Minimaal</div>
<div class="t" style="left:730.5px;top:877.86px;font-size:16px;color:#252423;transform:scaleX(0.9934);transform-origin:left top;">Werknemers gedetacheerd / uitgezon...</div>
<div class="t" style="left:1031px;top:877.86px;font-size:16px;color:#252423;transform:scaleX(0.9695);transform-origin:left top;">T. Extruder</div>
<div class="t" style="left:1321.8px;top:877.86px;font-size:16px;color:#252423;transform:scaleX(0.9558);transform-origin:left top;">5 - (Leeg)</div>
<div class="t" style="left:1617px;top:877.86px;font-size:16px;color:#252423;transform:scaleX(1.0351);transform-origin:left top;">Matig</div>
<div class="t" style="left:1699px;top:877.86px;font-size:16px;color:#252423;transform:scaleX(1.0292);transform-origin:left top;">Mogelijk</div>
<div class="t" style="left:1828.7px;top:877.86px;font-size:16px;color:#252423;transform:scaleX(0.9579);transform-origin:left top;">Gering</div>
<div class="t" style="left:1939.5px;top:879.13px;font-size:14.5px;color:#252423;">L</div>
<div class="t" style="left:1968px;top:877.86px;font-size:16px;color:#252423;">2,3</div>
<div class="t" style="left:730.5px;top:914.86px;font-size:16px;color:#252423;transform:scaleX(0.9923);transform-origin:left top;">Verliesgevende activiteiten</div>
<div class="t" style="left:1031px;top:914.86px;font-size:16px;color:#252423;transform:scaleX(0.9794);transform-origin:left top;">Expeditie (ontvangst, opslag en bela...</div>
<div class="t" style="left:1321.8px;top:914.86px;font-size:16px;color:#252423;transform:scaleX(0.9928);transform-origin:left top;">1 - Laag of Vermijden</div>
<div class="t" style="left:1617px;top:914.86px;font-size:16px;color:#252423;transform:scaleX(0.9267);transform-origin:left top;">Langza...</div>
<div class="t" style="left:1699px;top:914.86px;font-size:16px;color:#252423;transform:scaleX(1.0292);transform-origin:left top;">Mogelijk</div>
<div class="t" style="left:1828.7px;top:914.86px;font-size:16px;color:#252423;transform:scaleX(1.0351);transform-origin:left top;">Matig</div>
<div class="t" style="left:1939.5px;top:916.13px;font-size:14.5px;color:#252423;">G</div>
<div class="t" style="left:1968px;top:914.86px;font-size:16px;color:#252423;">3,3</div>
<div class="t" style="left:2049px;top:914.86px;font-size:16px;color:#252423;transform:scaleX(1.0292);transform-origin:left top;">Mogelijk</div>
<div class="t" style="left:2227px;top:914.86px;font-size:16px;color:#252423;transform:scaleX(0.9579);transform-origin:left top;">Gering</div>
<div class="t" style="left:2311.7px;top:914.86px;font-size:16px;color:#252423;">L</div>
<div class="t" style="left:730.5px;top:952.86px;font-size:16px;color:#252423;transform:scaleX(0.9923);transform-origin:left top;">Verliesgevende activiteiten</div>
<div class="t" style="left:1031px;top:952.86px;font-size:16px;color:#252423;">Externe productie</div>
<div class="t" style="left:1321.8px;top:952.86px;font-size:16px;color:#252423;transform:scaleX(0.9928);transform-origin:left top;">1 - Laag of Vermijden</div>
<div class="t" style="left:1617px;top:952.86px;font-size:16px;color:#252423;transform:scaleX(0.9267);transform-origin:left top;">Langza...</div>
<div class="t" style="left:1699px;top:952.86px;font-size:16px;color:#252423;transform:scaleX(1.0292);transform-origin:left top;">Mogelijk</div>
<div class="t" style="left:1828.7px;top:952.86px;font-size:16px;color:#252423;transform:scaleX(1.0351);transform-origin:left top;">Matig</div>
<div class="t" style="left:1939.5px;top:954.13px;font-size:14.5px;color:#252423;">G</div>
<div class="t" style="left:1968px;top:952.86px;font-size:16px;color:#252423;">3,3</div>
<div class="t" style="left:2049px;top:952.86px;font-size:16px;color:#252423;transform:scaleX(1.0292);transform-origin:left top;">Mogelijk</div>
<div class="t" style="left:2227px;top:952.86px;font-size:16px;color:#252423;transform:scaleX(0.9579);transform-origin:left top;">Gering</div>
<div class="t" style="left:2311.7px;top:952.86px;font-size:16px;color:#252423;">L</div>
<div class="t" style="left:730.5px;top:990.86px;font-size:16px;color:#252423;transform:scaleX(0.9923);transform-origin:left top;">Verliesgevende activiteiten</div>
<div class="t" style="left:1031px;top:990.86px;font-size:16px;color:#252423;">G. Grieslijn</div>
<div class="t" style="left:1321.8px;top:990.86px;font-size:16px;color:#252423;transform:scaleX(0.9928);transform-origin:left top;">1 - Laag of Vermijden</div>
<div class="t" style="left:1617px;top:990.86px;font-size:16px;color:#252423;transform:scaleX(0.9267);transform-origin:left top;">Langza...</div>
<div class="t" style="left:1699px;top:990.86px;font-size:16px;color:#252423;transform:scaleX(1.0292);transform-origin:left top;">Mogelijk</div>
<div class="t" style="left:1828.7px;top:990.86px;font-size:16px;color:#252423;transform:scaleX(1.0351);transform-origin:left top;">Matig</div>
<div class="t" style="left:1939.5px;top:992.13px;font-size:14.5px;color:#252423;">G</div>
<div class="t" style="left:1968px;top:990.86px;font-size:16px;color:#252423;">3,3</div>
<div class="t" style="left:2049px;top:990.86px;font-size:16px;color:#252423;transform:scaleX(1.0292);transform-origin:left top;">Mogelijk</div>
<div class="t" style="left:2227px;top:990.86px;font-size:16px;color:#252423;transform:scaleX(0.9579);transform-origin:left top;">Gering</div>
<div class="t" style="left:2311.7px;top:990.86px;font-size:16px;color:#252423;">L</div>
<div class="t" style="left:730.5px;top:1027.86px;font-size:16px;color:#252423;transform:scaleX(0.9923);transform-origin:left top;">Verliesgevende activiteiten</div>
<div class="t" style="left:1031px;top:1027.86px;font-size:16px;color:#252423;">H. Sortering T2 Gruttenlijn</div>
<div class="t" style="left:1321.8px;top:1027.86px;font-size:16px;color:#252423;transform:scaleX(0.9928);transform-origin:left top;">1 - Laag of Vermijden</div>
<div class="t" style="left:1617px;top:1027.86px;font-size:16px;color:#252423;transform:scaleX(0.9267);transform-origin:left top;">Langza...</div>
<div class="t" style="left:1699px;top:1027.86px;font-size:16px;color:#252423;transform:scaleX(1.0292);transform-origin:left top;">Mogelijk</div>
<div class="t" style="left:1828.7px;top:1027.86px;font-size:16px;color:#252423;transform:scaleX(1.0351);transform-origin:left top;">Matig</div>
<div class="t" style="left:1939.5px;top:1029.13px;font-size:14.5px;color:#252423;">G</div>
<div class="t" style="left:1968px;top:1027.86px;font-size:16px;color:#252423;">3,3</div>
<div class="t" style="left:2049px;top:1027.86px;font-size:16px;color:#252423;transform:scaleX(1.0292);transform-origin:left top;">Mogelijk</div>
<div class="t" style="left:2227px;top:1027.86px;font-size:16px;color:#252423;transform:scaleX(0.9579);transform-origin:left top;">Gering</div>
<div class="t" style="left:2311.7px;top:1027.86px;font-size:16px;color:#252423;">L</div>
<div class="t" style="left:730.5px;top:1065.86px;font-size:16px;color:#252423;transform:scaleX(0.9923);transform-origin:left top;">Verliesgevende activiteiten</div>
<div class="t" style="left:1031px;top:1065.86px;font-size:16px;color:#252423;">J. Palletlijn</div>
<div class="t" style="left:1321.8px;top:1065.86px;font-size:16px;color:#252423;transform:scaleX(0.9928);transform-origin:left top;">1 - Laag of Vermijden</div>
<div class="t" style="left:1617px;top:1065.86px;font-size:16px;color:#252423;transform:scaleX(0.9267);transform-origin:left top;">Langza...</div>
<div class="t" style="left:1699px;top:1065.86px;font-size:16px;color:#252423;transform:scaleX(1.0292);transform-origin:left top;">Mogelijk</div>
<div class="t" style="left:1828.7px;top:1065.86px;font-size:16px;color:#252423;transform:scaleX(1.0351);transform-origin:left top;">Matig</div>
<div class="t" style="left:1939.5px;top:1067.13px;font-size:14.5px;color:#252423;">G</div>
<div class="t" style="left:1968px;top:1065.86px;font-size:16px;color:#252423;">3,3</div>
<div class="t" style="left:2049px;top:1065.86px;font-size:16px;color:#252423;transform:scaleX(1.0292);transform-origin:left top;">Mogelijk</div>
<div class="t" style="left:2227px;top:1065.86px;font-size:16px;color:#252423;transform:scaleX(0.9579);transform-origin:left top;">Gering</div>
<div class="t" style="left:2311.7px;top:1065.86px;font-size:16px;color:#252423;">L</div>
<div class="t" style="left:730.5px;top:1102.86px;font-size:16px;color:#252423;transform:scaleX(0.9923);transform-origin:left top;">Verliesgevende activiteiten</div>
<div class="t" style="left:1031px;top:1102.86px;font-size:16px;color:#252423;">Q. Alpine 2</div>
<div class="t" style="left:1321.8px;top:1102.86px;font-size:16px;color:#252423;transform:scaleX(0.9928);transform-origin:left top;">1 - Laag of Vermijden</div>
<div class="t" style="left:1617px;top:1102.86px;font-size:16px;color:#252423;transform:scaleX(0.9267);transform-origin:left top;">Langza...</div>
<div class="t" style="left:1699px;top:1102.86px;font-size:16px;color:#252423;transform:scaleX(1.0292);transform-origin:left top;">Mogelijk</div>
<div class="t" style="left:1828.7px;top:1102.86px;font-size:16px;color:#252423;transform:scaleX(1.0351);transform-origin:left top;">Matig</div>
<div class="t" style="left:1939.5px;top:1104.13px;font-size:14.5px;color:#252423;">G</div>
<div class="t" style="left:1968px;top:1102.86px;font-size:16px;color:#252423;">3,3</div>
<div class="t" style="left:2049px;top:1102.86px;font-size:16px;color:#252423;transform:scaleX(1.0292);transform-origin:left top;">Mogelijk</div>
<div class="t" style="left:2227px;top:1102.86px;font-size:16px;color:#252423;transform:scaleX(0.9579);transform-origin:left top;">Gering</div>
<div class="t" style="left:2311.7px;top:1102.86px;font-size:16px;color:#252423;">L</div>
<svg style="left:0;top:0" width="1" height="1"><g fill="none" stroke="#3C51A3" stroke-width="1.5"><g transform="translate(699.2 846)"><rect x="-7" y="-5.6" width="9.2" height="6.4" rx="3.2"/><rect x="-1.8" y="-2.8" width="9.4" height="6.6" rx="3.3"/></g><g transform="translate(699.2 883)"><rect x="-7" y="-5.6" width="9.2" height="6.4" rx="3.2"/><rect x="-1.8" y="-2.8" width="9.4" height="6.6" rx="3.3"/></g><g transform="translate(699.2 920)"><rect x="-7" y="-5.6" width="9.2" height="6.4" rx="3.2"/><rect x="-1.8" y="-2.8" width="9.4" height="6.6" rx="3.3"/></g><g transform="translate(699.2 958)"><rect x="-7" y="-5.6" width="9.2" height="6.4" rx="3.2"/><rect x="-1.8" y="-2.8" width="9.4" height="6.6" rx="3.3"/></g><g transform="translate(699.2 996)"><rect x="-7" y="-5.6" width="9.2" height="6.4" rx="3.2"/><rect x="-1.8" y="-2.8" width="9.4" height="6.6" rx="3.3"/></g><g transform="translate(699.2 1033)"><rect x="-7" y="-5.6" width="9.2" height="6.4" rx="3.2"/><rect x="-1.8" y="-2.8" width="9.4" height="6.6" rx="3.3"/></g><g transform="translate(699.2 1071)"><rect x="-7" y="-5.6" width="9.2" height="6.4" rx="3.2"/><rect x="-1.8" y="-2.8" width="9.4" height="6.6" rx="3.3"/></g><g transform="translate(699.2 1108)"><rect x="-7" y="-5.6" width="9.2" height="6.4" rx="3.2"/><rect x="-1.8" y="-2.8" width="9.4" height="6.6" rx="3.3"/></g></g></svg>
<div style="position:absolute;left:677px;top:1121.7px;width:1860px;height:9px;border-radius:4.5px;background:#AFAFAF"></div>
<div style="position:absolute;left:2541px;top:783px;width:9.5px;height:50.7px;border-radius:5px;background:#B0B0B0"></div>
</body></html>
